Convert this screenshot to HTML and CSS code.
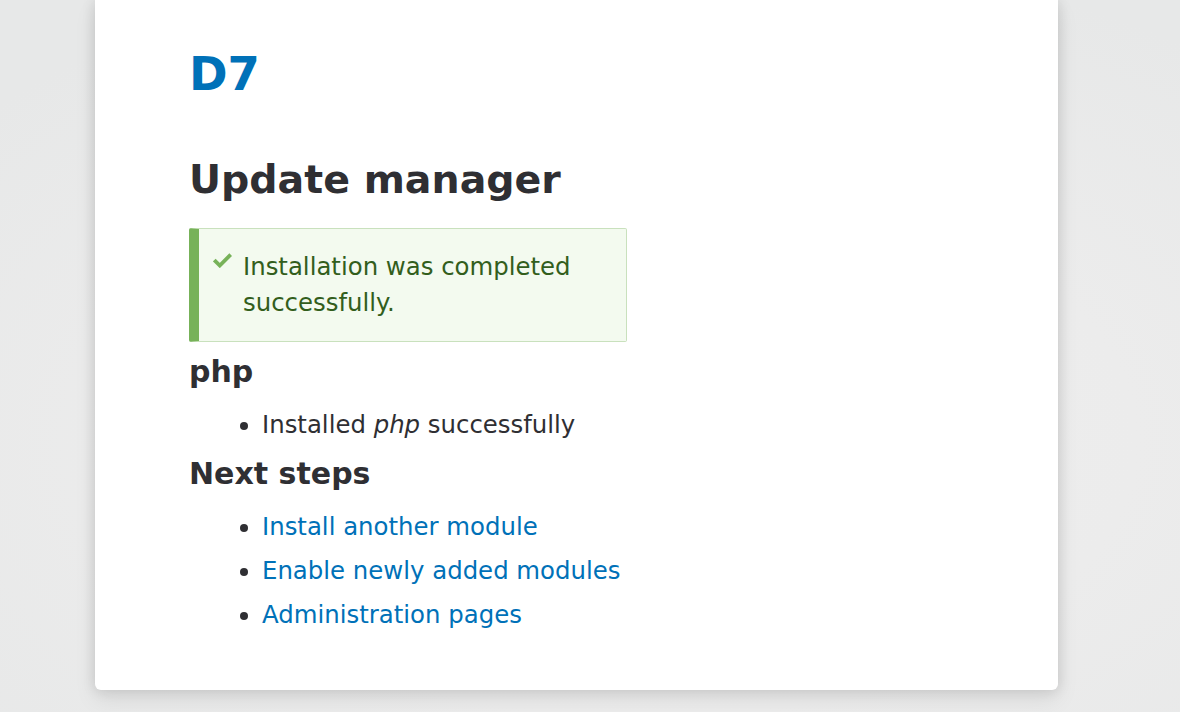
FILE: index.html
```html
<!DOCTYPE html>
<html lang="en">
<head>
<meta charset="utf-8">
<title>Update manager | D7</title>
<link rel="stylesheet" href="styles.css">
</head>
<body>
<main class="page">
  <div class="card">
    <header class="site-name"><a href="#" class="site-link">D7</a></header>
    <h1 class="page-title">Update manager</h1>
    <div class="message" role="status">
      <span class="message-icon">
        <svg width="19" height="15" viewBox="0 0 19 15" aria-hidden="true"><polyline points="1.3,7 6.8,12.5 17.7,1.6" fill="none" stroke="#77b259" stroke-width="3.8" stroke-linecap="butt" stroke-linejoin="miter"/></svg>
      </span>
      <div class="message-text">Installation was completed successfully.</div>
    </div>
    <section class="content">
      <h2 class="subhead">php</h2>
      <ul class="list">
        <li class="item">Installed <em>php</em> successfully</li>
      </ul>
      <h2 class="subhead">Next steps</h2>
      <ul class="list">
        <li class="item"><a href="#" class="link">Install another module</a></li>
        <li class="item"><a href="#" class="link">Enable newly added modules</a></li>
        <li class="item"><a href="#" class="link">Administration pages</a></li>
      </ul>
    </section>
  </div>
</main>
</body>
</html>
```
FILE: styles.css
```css
html, body {
  margin: 0;
  padding: 0;
  height: 100%;
}
body {
  font-family: "DejaVu Sans", sans-serif;
  color: #232429;
  background: radial-gradient(ellipse 75% 70% at 55% 62%, #efefef 0%, #ececec 55%, #e7e8e8 100%);
  overflow: hidden;
}
.page {
  display: flex;
  padding-left: 95px;
  align-items: flex-start;
}
.card {
  width: 963px;
  box-sizing: border-box;
  background: #fff;
  border-radius: 0 0 6px 6px;
  padding: 47px 94px 57px;
  box-shadow: 0 0 14px rgba(0,0,0,0.13), 0 10px 22px rgba(0,0,0,0.08);
}
.site-name {
  font-size: 46.5px;
  line-height: 55px;
  font-weight: bold;
}
.site-link {
  color: #0071b8;
  text-decoration: none;
}
.page-title {
  margin: 53px 0 0;
  font-size: 39.5px;
  line-height: 48px;
  font-weight: bold;
  color: #2f2f33;
}
.message {
  margin-top: 25px;
  width: 438px;
  box-sizing: border-box;
  display: flex;
  align-items: flex-start;
  gap: 11px;
  background: #f3faef;
  border: 1px solid #c9e1bd;
  border-left: 10px solid #77b259;
  border-radius: 2px;
  padding: 20px 12px 20px 14px;
  color: #325e1c;
  font-size: 24.4px;
  line-height: 36px;
}
.message-icon {
  display: flex;
  padding-top: 4px;
}
.content {
  margin-top: 12px;
}
.subhead {
  margin: 0;
  font-size: 30px;
  line-height: 36px;
  font-weight: bold;
  color: #2f2f33;
}
.list {
  margin: 17px 0 13px;
  padding-left: 73px;
  font-size: 24.4px;
  line-height: 36px;
  color: #2f2f33;
}
.list:last-child {
  margin-bottom: 0;
}
.item + .item {
  margin-top: 8px;
}
.link {
  color: #0071b8;
  text-decoration: none;
}
```
